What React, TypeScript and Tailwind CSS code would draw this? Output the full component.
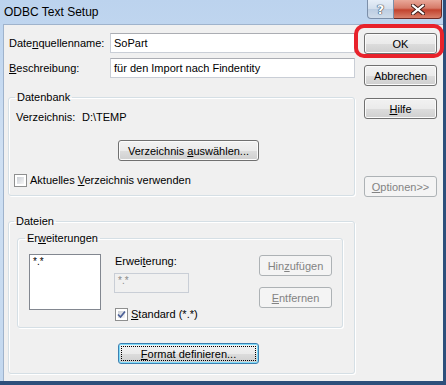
import React from 'react'

const ui = "font-['Liberation_Sans',Arial,sans-serif] text-[11px] leading-[14px]"

function Btn({
  children,
  disabled,
  focused,
  className = '',
}: {
  children: React.ReactNode
  disabled?: boolean
  focused?: boolean
  className?: string
}) {
  const look = disabled
    ? 'border-[#adb2b5] bg-[#f4f4f4] text-[#838383]'
    : focused
      ? 'border-[#3c7fb1] bg-[linear-gradient(#f2f2f2_0%,#ebebeb_50%,#dddddd_51%,#cfcfcf_100%)] text-black shadow-[inset_0_0_0_1px_#7fdcf9] outline-1 outline-dotted outline-black outline-offset-[-4px]'
      : 'border-[#707070] bg-[linear-gradient(#f2f2f2_0%,#ebebeb_50%,#dddddd_51%,#cfcfcf_100%)] text-black shadow-[inset_0_0_0_1px_#fbfbfb]'
  return (
    <div className={`flex items-center justify-center h-[21px] whitespace-nowrap rounded-[3px] border ${look} ${className}`}>
      {children}
    </div>
  )
}

function Check({ checked }: { checked?: boolean }) {
  return (
    <div className="w-[13px] h-[13px] shrink-0 border border-[#8e8f8f] bg-white p-[2px]">
      <div className="w-full h-full bg-[linear-gradient(135deg,#cbcfd5,#f6f6f6)] relative">
        {checked && (
          <svg viewBox="0 0 9 9" className="absolute -left-[1px] -top-[1px] w-[9px] h-[9px]">
            <path d="M1 4.5 L3.5 7 L8 1.5" fill="none" stroke="#4a5f97" strokeWidth="1.7" />
          </svg>
        )}
      </div>
    </div>
  )
}

function Group({
  label,
  className = '',
  legendClass = '',
  children,
}: {
  label: React.ReactNode
  className?: string
  legendClass?: string
  children: React.ReactNode
}) {
  return (
    <fieldset
      className={`border border-[#d5dfe5] rounded-[3px] shadow-[inset_1px_1px_0_#ffffff,1px_1px_0_#ffffff] ${className}`}
    >
      <legend className={`px-[2px] ${legendClass}`}>{label}</legend>
      {children}
    </fieldset>
  )
}

export default function App() {
  return (
    <div className={`relative w-[446px] h-[385px] flex flex-col bg-[linear-gradient(#bcd3ee,#cfe0f3_40%,#c3d8ef)] border-r-[3px] border-b-[4px] border-[#2d4f7b] ${ui}`}>
      {/* title bar */}
      <div className="h-[24px] flex items-start shrink-0">
        <div className="pl-[4px] pt-[5px] text-[12px] leading-[15px] text-black">ODBC Text Setup</div>
        <div className="ml-auto mr-[1px] flex">
          <div className="w-[27px] h-[19px] flex items-center justify-center rounded-bl-[4px] border border-t-0 border-[#7c8fa9] bg-[linear-gradient(#e6eef8,#d2deec_50%,#bccde2_51%,#cfdcea)]">
            <span className="font-['DejaVu_Sans',sans-serif] font-bold text-[13px] leading-[13px] text-white [text-shadow:0_0_1px_#2d3e55,0_0_1px_#2d3e55,0_0_1px_#2d3e55]">
              ?
            </span>
          </div>
          <div className="w-[48px] h-[19px] flex items-center justify-center rounded-br-[4px] border border-t-0 border-l-0 border-[#6d2a24] bg-[linear-gradient(#e9a899,#d67a68_45%,#c2432e_55%,#d9806a)]">
            <svg viewBox="0 0 14 11" className="w-[14px] h-[11px]">
              <path d="M2 1.5 L12 9.5 M12 1.5 L2 9.5" stroke="#3b1a16" strokeWidth="4" strokeLinecap="square" />
              <path d="M2 1.5 L12 9.5 M12 1.5 L2 9.5" stroke="#ffffff" strokeWidth="2.2" strokeLinecap="square" />
            </svg>
          </div>
        </div>
      </div>

      {/* client area */}
      <div className="flex-1 ml-[3px] flex bg-[#f0f0f0] border-l border-t border-[#9fb3cc] text-black">
        {/* left column */}
        <div className="ml-[4px] w-[347px] pt-[8px] flex flex-col">
          <div className="flex items-center h-[20px]">
            <div className="w-[102px] pl-[1px]">
              Date<span className="underline">n</span>quellenname:
            </div>
            <div className="w-[245px] h-[20px] flex items-center border border-[#c9ced6] border-t-[#abadb3] bg-white px-[3px]">
              SoPart
            </div>
          </div>
          <div className="flex items-center h-[20px] mt-[5px]">
            <div className="w-[102px] pl-[1px]">
              <span className="underline">B</span>eschreibung:
            </div>
            <div className="w-[245px] h-[20px] flex items-center border border-[#c9ced6] border-t-[#abadb3] bg-white px-[3px]">
              für den Import nach Findentity
            </div>
          </div>

          <Group label="Datenbank" className="mt-[12px] h-[106px] pl-[7px]" legendClass="-ml-[1px]">
            <div className="flex mt-[6px]">
              <div className="w-[66px]">Verzeichnis:</div>
              <div>D:\TEMP</div>
            </div>
            <Btn className="mt-[16px] ml-[102px] w-[141px]">
              Verzeichnis&nbsp;<span className="underline">a</span>uswählen...
            </Btn>
            <div className="flex items-center mt-[12px] -ml-[2px] gap-[3px]">
              <Check />
              <div>
                Aktuelles <span className="underline">V</span>erzeichnis verwenden
              </div>
            </div>
          </Group>

          <Group label="Dateien" className="mt-[18px] h-[160px] pl-[8px]" legendClass="-ml-[3px]">
            <Group
              label={
                <>
                  Er<span className="underline">w</span>eiterungen
                </>
              }
              className="mt-[3px] w-[326px] h-[97px] pl-[11px]"
              legendClass="-ml-[4px]"
            >
              <div className="flex">
                <div className="mt-[9px] w-[72px] h-[56px] border border-[#828790] bg-white px-[3px] pt-[1px] text-[10px] leading-[11px]">
                  *.*
                </div>
                <div className="ml-[13px] w-[75px] flex flex-col">
                  <div className="mt-[9px] pl-[1px]">
                    Erwei<span className="underline">t</span>erung:
                  </div>
                  <div className="mt-[5px] h-[20px] border border-[#c9ced6] bg-[#f0f0f0] px-[3px] pt-[1px] text-[#8a8a8a] text-[10px] leading-[11px]">
                    *.*
                  </div>
                  <div className="flex items-center mt-[14px] gap-[3px] pl-[1px] whitespace-nowrap">
                    <Check checked />
                    <div>
                      <span className="underline">S</span>tandard (*.*)
                    </div>
                  </div>
                </div>
                <div className="ml-[70px] flex flex-col">
                  <Btn disabled className="mt-[10px] w-[73px]">
                    Hin<span className="underline">z</span>ufügen
                  </Btn>
                  <Btn disabled className="mt-[11px] w-[73px]">
                    <span className="underline">E</span>ntfernen
                  </Btn>
                </div>
              </div>
            </Group>
            <Btn focused className="mt-[15px] ml-[101px] w-[141px]">
              <span className="underline">F</span>ormat definieren...
            </Btn>
          </Group>
        </div>

        {/* right column */}
        <div className="ml-[9px] w-[73px] pt-[8px] flex flex-col">
          <Btn>OK</Btn>
          <Btn className="mt-[11px]">Abbrechen</Btn>
          <Btn className="mt-[12px]">
            <span className="underline">H</span>ilfe
          </Btn>
          <Btn disabled className="mt-[57px]">
            <span className="underline">O</span>ptionen&gt;&gt;
          </Btn>
        </div>
      </div>

      {/* red highlight drawn over the OK button */}
      <div className="absolute left-[354px] top-[24px] w-[90px] h-[34px] rounded-[10px] border-[4px] border-[#e8222b]" />
    </div>
  )
}
